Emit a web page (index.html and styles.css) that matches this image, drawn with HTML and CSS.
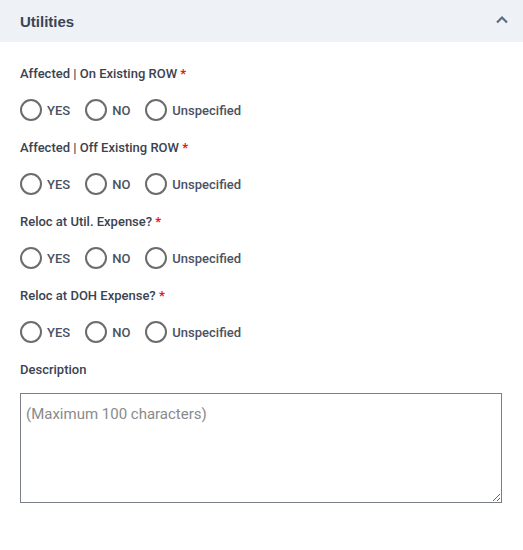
FILE: index.html
```html
<!DOCTYPE html>
<html lang="en">
<head>
    <meta charset="UTF-8">
    <meta name="viewport" content="width=device-width, initial-scale=1.0">
    <title>Utilities</title>
    <link rel="stylesheet" href="styles.css">
</head>
<body>
    <div class="panel">
        <div class="panel-head">
            <span class="panel-title">Utilities</span>
            <svg class="chevron" width="14" height="9" viewBox="0 0 14 9">
                <path d="M2 7.5 L7 2.5 L12 7.5" fill="none" stroke="#5b6b80" stroke-width="2.2"/>
            </svg>
        </div>
        <div class="panel-body">
            <div class="field">
                <div class="field-label">Affected | On Existing ROW <span class="req">*</span></div>
                <div class="choices">
                    <label class="choice"><input type="radio" name="on_row"><span>YES</span></label>
                    <label class="choice"><input type="radio" name="on_row"><span>NO</span></label>
                    <label class="choice"><input type="radio" name="on_row"><span>Unspecified</span></label>
                </div>
            </div>
            <div class="field">
                <div class="field-label">Affected | Off Existing ROW <span class="req">*</span></div>
                <div class="choices">
                    <label class="choice"><input type="radio" name="off_row"><span>YES</span></label>
                    <label class="choice"><input type="radio" name="off_row"><span>NO</span></label>
                    <label class="choice"><input type="radio" name="off_row"><span>Unspecified</span></label>
                </div>
            </div>
            <div class="field">
                <div class="field-label">Reloc at Util. Expense? <span class="req">*</span></div>
                <div class="choices">
                    <label class="choice"><input type="radio" name="util_exp"><span>YES</span></label>
                    <label class="choice"><input type="radio" name="util_exp"><span>NO</span></label>
                    <label class="choice"><input type="radio" name="util_exp"><span>Unspecified</span></label>
                </div>
            </div>
            <div class="field">
                <div class="field-label">Reloc at DOH Expense? <span class="req">*</span></div>
                <div class="choices">
                    <label class="choice"><input type="radio" name="doh_exp"><span>YES</span></label>
                    <label class="choice"><input type="radio" name="doh_exp"><span>NO</span></label>
                    <label class="choice"><input type="radio" name="doh_exp"><span>Unspecified</span></label>
                </div>
            </div>
            <div class="field">
                <div class="field-label desc-label">Description</div>
                <textarea class="desc" maxlength="100" placeholder="(Maximum 100 characters)"></textarea>
            </div>
        </div>
    </div>
</body>
</html>
```

FILE: styles.css
```css
body {
    margin: 0;
    font-family: Roboto, 'Liberation Sans', sans-serif;
    background-color: #ffffff;
}

.panel-head {
    display: flex;
    align-items: center;
    justify-content: space-between;
    height: 42px;
    padding: 0 14px 0 20px;
    background-color: #eef2f6;
}

.panel-title {
    font-family: 'Liberation Sans', Arial, sans-serif;
    font-weight: bold;
    font-size: 15px;
    color: #3a4556;
}

.chevron {
    display: block;
    margin-bottom: 3px;
}

.panel-body {
    padding: 24px 21px 0 20px;
}

.field {
    margin-bottom: 19px;
}

.field-label {
    font-size: 13px;
    font-weight: 500;
    line-height: 16px;
    color: #3b4350;
    margin-bottom: 17px;
}

.desc-label {
    margin-bottom: 15px;
}

.req {
    color: #e8141b;
    font-weight: bold;
}

.choices {
    display: flex;
    height: 22px;
}

.choice {
    display: flex;
    align-items: center;
    margin-right: 15px;
    font-size: 13px;
    font-weight: 500;
    color: #4a5260;
}

.choice input {
    appearance: none;
    -webkit-appearance: none;
    width: 22px;
    height: 22px;
    margin: 0 5px 0 0;
    border: 2px solid #6c6c6c;
    border-radius: 50%;
    background: #fff;
}

.desc {
    display: block;
    box-sizing: border-box;
    width: 100%;
    height: 110px;
    padding: 11px 5px;
    border: 1px solid #7a7f8a;
    border-radius: 0;
    font-family: Roboto, 'Liberation Sans', sans-serif;
    font-size: 15px;
    color: #333;
    resize: vertical;
}

.desc::placeholder {
    color: #8a8a8a;
}
```
